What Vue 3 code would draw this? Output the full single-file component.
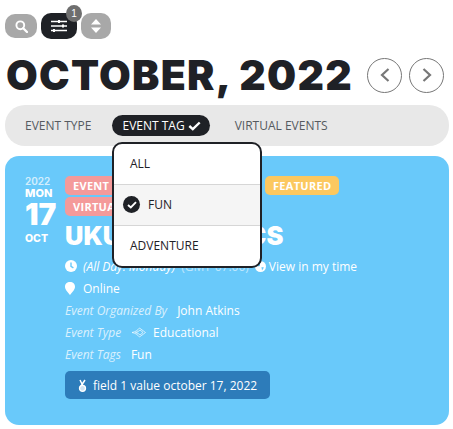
<script setup>
import { ref } from 'vue';

const filterTabs = ref([
    { label: 'EVENT TYPE', active: false },
    { label: 'EVENT TAG', active: true },
    { label: 'VIRTUAL EVENTS', active: false },
]);

const tagOptions = ref([
    { label: 'ALL', selected: false },
    { label: 'FUN', selected: true },
    { label: 'ADVENTURE', selected: false },
]);
</script>

<template>
    <div class="calendar">
        <div class="toolbar">
            <button class="tool-btn search-btn">
                <svg width="13" height="13" viewBox="0 0 13 13">
                    <circle cx="5.3" cy="5.3" r="3.9" fill="none" stroke="#fff" stroke-width="1.9" />
                    <path d="M8.2 8.2 L12 12" stroke="#fff" stroke-width="2.3" stroke-linecap="round" />
                </svg>
            </button>
            <button class="tool-btn filter-btn">
                <svg width="18" height="14" viewBox="0 0 18 14">
                    <path d="M1 2.5h16M1 7h16M1 11.5h16" stroke="#fff" stroke-width="1.5" />
                    <path d="M9 1v3M13 5.5v3M4 10v3" stroke="#fff" stroke-width="2" />
                </svg>
                <span class="count-badge">1</span>
            </button>
            <button class="tool-btn sort-btn">
                <svg width="12" height="16" viewBox="0 0 12 16">
                    <path d="M6 1 L11 6.5 H1 Z M6 15 L11 9.5 H1 Z" fill="#fff" />
                </svg>
            </button>
        </div>

        <div class="month-row">
            <h1 class="month-title">OCTOBER, 2022</h1>
            <div class="month-nav">
                <button class="nav-btn">
                    <svg width="12" height="16" viewBox="0 0 12 16">
                        <path d="M9.5 2 L3 8 L9.5 14" fill="none" stroke="#777" stroke-width="2.2" />
                    </svg>
                </button>
                <button class="nav-btn">
                    <svg width="12" height="16" viewBox="0 0 12 16">
                        <path d="M2.5 2 L9 8 L2.5 14" fill="none" stroke="#777" stroke-width="2.2" />
                    </svg>
                </button>
            </div>
        </div>

        <div class="filter-bar">
            <div v-for="tab in filterTabs" :key="tab.label" class="filter-tab" :class="{ active: tab.active }">
                {{ tab.label }}
                <svg v-if="tab.active" width="13" height="10" viewBox="0 0 13 10">
                    <path d="M1.3 5 L4.8 8.2 L11.7 1.5" fill="none" stroke="#fff" stroke-width="2.4" />
                </svg>
            </div>

            <div class="tag-menu">
                <div v-for="opt in tagOptions" :key="opt.label" class="tag-option" :class="{ selected: opt.selected }">
                    <span v-if="opt.selected" class="tick">
                        <svg width="10" height="8" viewBox="0 0 10 8">
                            <path d="M1 4 L3.8 6.5 L9 1.2" fill="none" stroke="#fff" stroke-width="1.9" />
                        </svg>
                    </span>
                    {{ opt.label }}
                </div>
            </div>
        </div>

        <div class="event-card">
            <div class="event-date">
                <span class="date-year">2022</span>
                <span class="date-day">MON</span>
                <span class="date-num">17</span>
                <span class="date-month">OCT</span>
            </div>
            <div class="event-body">
                <div class="event-tags">
                    <span class="tag tag-pink tag-long">EVENT</span>
                    <span class="tag tag-yellow">FEATURED</span>
                    <span class="tag tag-pink">VIRTUAL EVENT</span>
                </div>
                <h2 class="event-title">UKULELE BASICS</h2>
                <div class="meta-line time-line">
                    <svg class="clock" width="12" height="12" viewBox="0 0 12 12">
                        <circle cx="6" cy="6" r="6" fill="#fff" />
                        <path d="M6 2.6V6.3L8.4 7.8" fill="none" stroke="#69c9fa" stroke-width="1.4" />
                    </svg>
                    <em>(All Day: Monday)</em>
                    <span class="time-zone">(GMT-07:00)</span>
                    <svg width="11" height="11" viewBox="0 0 11 11">
                        <circle cx="5.5" cy="5.5" r="5.5" fill="#fff" />
                        <path d="M2 3 L5 2 L5 5 L2.500 5.500 Z M6.500 6 L9 6.500 L7 9.500 Z" fill="#69c9fa" />
                    </svg>
                    <span class="local-time">View in my time</span>
                </div>
                <div class="meta-line location-line">
                    <svg width="10" height="13" viewBox="0 0 10 13">
                        <path d="M5 0 C8 0 10 2 10 4.800 C10 8 6.500 11 5 13 C3.500 11 0 8 0 4.800 C0 2 2 0 5 0 Z" fill="#fff" />
                    </svg>
                    <span>Online</span>
                </div>
                <div class="meta-line detail-line">
                    <em class="meta-label">Event Organized By</em>
                    <span>John Atkins</span>
                </div>
                <div class="meta-line detail-line">
                    <em class="meta-label">Event Type</em>
                    <svg class="type-icon" width="15" height="11" viewBox="0 0 15 11">
                        <path d="M1 5.500 C4 5 6.500 3.500 8.500 1 L14.500 5.500 L8.500 10 C6.500 7.500 4 6 1 5.500 Z M4.500 5.500 C6.500 5 8 4.200 9 3 L12 5.500 L9 8 C8 6.800 6.500 6 4.500 5.500 Z" fill="none" stroke="#fff" stroke-width="0.8" opacity="0.85" />
                    </svg>
                    <span>Educational</span>
                </div>
                <div class="meta-line detail-line">
                    <em class="meta-label">Event Tags</em>
                    <span>Fun</span>
                </div>
                <div class="field-badge">
                    <svg width="9" height="13" viewBox="0 0 9 13">
                        <path d="M2 1 L5 7 M7 1 L3 7" fill="none" stroke="#fff" stroke-width="1.500" />
                        <circle cx="4.500" cy="9.300" r="3" fill="#cfe3f2" stroke="#fff" stroke-width="1.300" />
                    </svg>
                    field 1 value october 17, 2022
                </div>
            </div>
        </div>
    </div>
</template>

<style scoped>
.calendar {
    width: 453px;
    height: 429px;
    box-sizing: border-box;
    padding: 13px 4px 0 5px;
    overflow: hidden;
    background: #fff;
    font-family: "Open Sans", sans-serif;
    color: #fff;
}

/* --- Toolbar --- */
.toolbar {
    display: flex;
    gap: 4px;
    align-items: center;
}

.tool-btn {
    position: relative;
    display: flex;
    align-items: center;
    justify-content: center;
    height: 26px;
    padding: 0;
    border: 0;
    border-radius: 10px;
    background: #a8a8a8;
}

.search-btn {
    width: 32px;
    height: 24px;
}

.filter-btn {
    width: 36px;
    background: #1f2126;
}

.sort-btn {
    width: 30px;
}

.count-badge {
    position: absolute;
    top: -8px;
    right: -5px;
    width: 16px;
    height: 17px;
    border-radius: 50%;
    background: #6e6e6e;
    color: #fff;
    font-size: 10px;
    line-height: 17px;
    text-align: center;
}

/* --- Month heading --- */
.month-row {
    display: flex;
    align-items: center;
    margin-top: 13px;
    height: 46px;
}

.month-title {
    margin: 0 0 0 1px;
    width: 361px;
    font-family: Inter, sans-serif;
    font-size: 41px;
    font-weight: 900;
    letter-spacing: 1.25px;
    line-height: 46px;
    color: #1f2126;
    white-space: nowrap;
}

.month-nav {
    display: flex;
    gap: 7px;
}

.nav-btn {
    display: flex;
    align-items: center;
    justify-content: center;
    width: 35px;
    height: 35px;
    padding: 0;
    border: 1px solid #777;
    border-radius: 50%;
    background: #fff;
}

/* --- Filter bar --- */
.filter-bar {
    position: relative;
    display: flex;
    align-items: center;
    gap: 25px;
    height: 41px;
    margin-top: 7px;
    padding-left: 20px;
    border-radius: 20px;
    background: #e8e8e8;
    font-size: 12px;
    color: #555a60;
}

.filter-tab {
    display: flex;
    align-items: center;
    gap: 3px;
    white-space: nowrap;
}

.filter-tab.active {
    height: 21px;
    margin-left: -4px;
    padding: 0 9px 0 10px;
    border-radius: 11px;
    background: #1f2126;
    color: #fff;
}

.tag-menu {
    position: absolute;
    top: 37px;
    left: 107px;
    z-index: 2;
    width: 146px;
    height: 122px;
    border: 2px solid #1f2126;
    border-radius: 10px;
    background: #fff;
    color: #1f2126;
    overflow: hidden;
}

.tag-option {
    display: flex;
    align-items: center;
    gap: 8px;
    height: 39px;
    padding: 0 0 1px 16px;
    border-bottom: 1px solid #d6d6d6;
}

.tag-option:last-child {
    border-bottom: 0;
}

.tag-option.selected {
    padding-left: 9px;
    background: #f5f5f5;
}

.tick {
    display: flex;
    align-items: center;
    justify-content: center;
    width: 17px;
    height: 17px;
    border-radius: 50%;
    background: #1f2126;
}

/* --- Event card --- */
.event-card {
    display: flex;
    height: 269px;
    box-sizing: border-box;
    margin-top: 10px;
    padding: 20px 20px 0 20px;
    border-radius: 14px;
    background: #69c9fa;
}

.event-date {
    display: flex;
    flex-direction: column;
    align-items: flex-start;
    width: 30px;
    margin-right: 10px;
    font-family: Inter, sans-serif;
    font-weight: 800;
}

.date-year {
    font-size: 10px;
    line-height: 10px;
    font-weight: 600;
    opacity: 0.7;
}

.date-day {
    margin-top: 1px;
    font-size: 11px;
    line-height: 12px;
}

.date-num {
    font-size: 30px;
    line-height: 30px;
    font-weight: 900;
}

.date-month {
    margin-top: 4px;
    font-size: 10.5px;
    line-height: 11px;
}

.event-body {
    flex: 1;
    min-width: 0;
}

.event-tags {
    display: flex;
    flex-wrap: wrap;
    gap: 2px 4px;
}

.tag {
    height: 19px;
    padding: 0 8px;
    border-radius: 5px;
    font-size: 11px;
    font-weight: 700;
    line-height: 19px;
    letter-spacing: 0.3px;
    white-space: nowrap;
}

.tag-long {
    width: 196px;
    box-sizing: border-box;
    overflow: hidden;
}

.tag-pink {
    background: #f49a9a;
}

.tag-yellow {
    background: #fcc85f;
}

.event-title {
    margin: 4px 0 5px;
    font-family: Inter, sans-serif;
    font-size: 25.5px;
    font-weight: 900;
    line-height: 32px;
    white-space: nowrap;
}

.meta-line {
    display: flex;
    align-items: center;
    font-size: 12px;
    white-space: nowrap;
}

.time-line {
    gap: 6px;
    height: 18px;
}

.time-zone {
    opacity: 0.55;
}

.local-time {
    margin-left: -3px;
}

.location-line {
    gap: 8px;
    height: 18px;
    margin-top: 4px;
}

.detail-line {
    gap: 10px;
    height: 18px;
    margin-top: 4px;
}

.type-icon {
    margin-right: -3px;
}

.meta-label {
    opacity: 0.75;
}

.field-badge {
    display: flex;
    align-items: center;
    gap: 6px;
    width: 205px;
    height: 28px;
    box-sizing: border-box;
    margin-top: 8px;
    padding-left: 13px;
    border-radius: 5px;
    background: #2d7cba;
    font-size: 12px;
    white-space: nowrap;
}
</style>

<style>
html,
body {
    background: #fff;
}
</style>
